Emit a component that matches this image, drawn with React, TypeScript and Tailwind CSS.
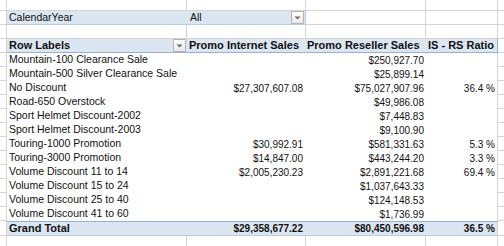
const rows = [
  { label: "Mountain-100 Clearance Sale", internet: "", reseller: "$250,927.70", ratio: "" },
  { label: "Mountain-500 Silver Clearance Sale", internet: "", reseller: "$25,899.14", ratio: "" },
  { label: "No Discount", internet: "$27,307,607.08", reseller: "$75,027,907.96", ratio: "36.4 %" },
  { label: "Road-650 Overstock", internet: "", reseller: "$49,986.08", ratio: "" },
  { label: "Sport Helmet Discount-2002", internet: "", reseller: "$7,448.83", ratio: "" },
  { label: "Sport Helmet Discount-2003", internet: "", reseller: "$9,100.90", ratio: "" },
  { label: "Touring-1000 Promotion", internet: "$30,992.91", reseller: "$581,331.63", ratio: "5.3 %" },
  { label: "Touring-3000 Promotion", internet: "$14,847.00", reseller: "$443,244.20", ratio: "3.3 %" },
  { label: "Volume Discount 11 to 14", internet: "$2,005,230.23", reseller: "$2,891,221.68", ratio: "69.4 %" },
  { label: "Volume Discount 15 to 24", internet: "", reseller: "$1,037,643.33", ratio: "" },
  { label: "Volume Discount 25 to 40", internet: "", reseller: "$124,148.53", ratio: "" },
  { label: "Volume Discount 41 to 60", internet: "", reseller: "$1,736.99", ratio: "" },
];

function DropButton() {
  return (
    <span className="flex h-[13px] w-[13px] shrink-0 items-center justify-center border border-[#b4b4b4] bg-gradient-to-b from-white to-[#e8e8e8]">
      <svg width="7" height="4" viewBox="0 0 7 4">
        <path d="M0.5 0.5 L6.5 0.5 L3.5 3.5 Z" fill="#6b6b6b" />
      </svg>
    </span>
  );
}

function GridRow({ h }: { h: string }) {
  return (
    <div className={`flex ${h}`}>
      <div className="w-[7px] border-r border-b border-[#d4d4d4]" />
      <div className="w-[180px] border-r border-b border-[#d4d4d4]" />
      <div className="w-[119px] border-r border-b border-[#d4d4d4]" />
      <div className="w-[120px] border-r border-b border-[#d4d4d4]" />
      <div className="w-[72px] border-r border-b border-[#d4d4d4]" />
      <div className="flex-1 border-b border-[#d4d4d4]" />
    </div>
  );
}

export default function App() {
  return (
    <div
      className="h-[246px] w-[504px] overflow-hidden bg-white text-[10.5px] text-[#111]"
      style={{ fontFamily: '"Liberation Sans", Arial, sans-serif' }}
    >
      <GridRow h="h-[11px]" />

      <div className="flex h-[14px]">
        <div className="w-[7px] border-r border-b border-[#d4d4d4]" />
        <div className="flex w-[180px] items-center border-b border-[#b8cce4] bg-[#dce6f1] pl-[2px]">CalendarYear</div>
        <div className="flex w-[119px] items-center justify-between border-r border-b border-[#b8cce4] bg-[#dce6f1] pl-[3px] pr-[1px]">
          <span>All</span>
          <DropButton />
        </div>
        <div className="w-[120px] border-r border-b border-[#d4d4d4]" />
        <div className="w-[72px] border-r border-b border-[#d4d4d4]" />
        <div className="flex-1 border-b border-[#d4d4d4]" />
      </div>

      <GridRow h="h-[14px]" />

      <div className="flex h-[14px] font-bold text-[11px]">
        <div className="w-[7px] border-r border-b border-[#d4d4d4]" />
        <div className="flex w-[180px] items-center justify-between border-b border-[#95b3d7] bg-[#dce6f1] pl-[2px] pr-[1px]">
          <span>Row Labels</span>
          <DropButton />
        </div>
        <div className="flex w-[119px] items-center border-b border-[#95b3d7] bg-[#dce6f1] pl-[2px] whitespace-nowrap">Promo Internet Sales</div>
        <div className="flex w-[120px] items-center border-b border-[#95b3d7] bg-[#dce6f1] pl-[1px] whitespace-nowrap">Promo Reseller Sales</div>
        <div className="flex w-[72px] items-center border-r border-b border-[#95b3d7] bg-[#dce6f1] pl-[2px] whitespace-nowrap">IS - RS Ratio</div>
        <div className="flex-1 border-b border-[#d4d4d4]" />
      </div>

      {rows.map((r) => (
        <div key={r.label} className="flex h-[14px]">
          <div className="w-[7px] border-r border-b border-[#d4d4d4]" />
          <div className="flex w-[180px] items-center pl-[2px] whitespace-nowrap">{r.label}</div>
          <div className="flex w-[119px] items-center justify-end pr-[3px] text-[10px]">{r.internet}</div>
          <div className="flex w-[120px] items-center justify-end pr-[2px] text-[10px]">{r.reseller}</div>
          <div className="flex w-[72px] items-center justify-end border-r border-[#d4d4d4] pr-[2px] text-[10px]">{r.ratio}</div>
          <div className="flex-1 border-b border-[#d4d4d4]" />
        </div>
      ))}

      <div className="flex h-[15px] font-bold">
        <div className="w-[7px] border-r border-b border-[#d4d4d4]" />
        <div className="flex w-[180px] items-center border-t border-b border-t-[#95b3d7] border-b-[#b8cce4] bg-[#dce6f1] pl-[2px] text-[11px]">Grand Total</div>
        <div className="flex w-[119px] items-center justify-end border-t border-b border-t-[#95b3d7] border-b-[#b8cce4] bg-[#dce6f1] pr-[3px] text-[10px]">$29,358,677.22</div>
        <div className="flex w-[120px] items-center justify-end border-t border-b border-t-[#95b3d7] border-b-[#b8cce4] bg-[#dce6f1] pr-[2px] text-[10px]">$80,450,596.98</div>
        <div className="flex w-[72px] items-center justify-end border-t border-r border-b border-t-[#95b3d7] border-r-[#d4d4d4] border-b-[#b8cce4] bg-[#dce6f1] pr-[2px] text-[10px]">36.5 %</div>
        <div className="flex-1 border-b border-[#d4d4d4]" />
      </div>

      <GridRow h="h-[14px]" />
    </div>
  );
}
